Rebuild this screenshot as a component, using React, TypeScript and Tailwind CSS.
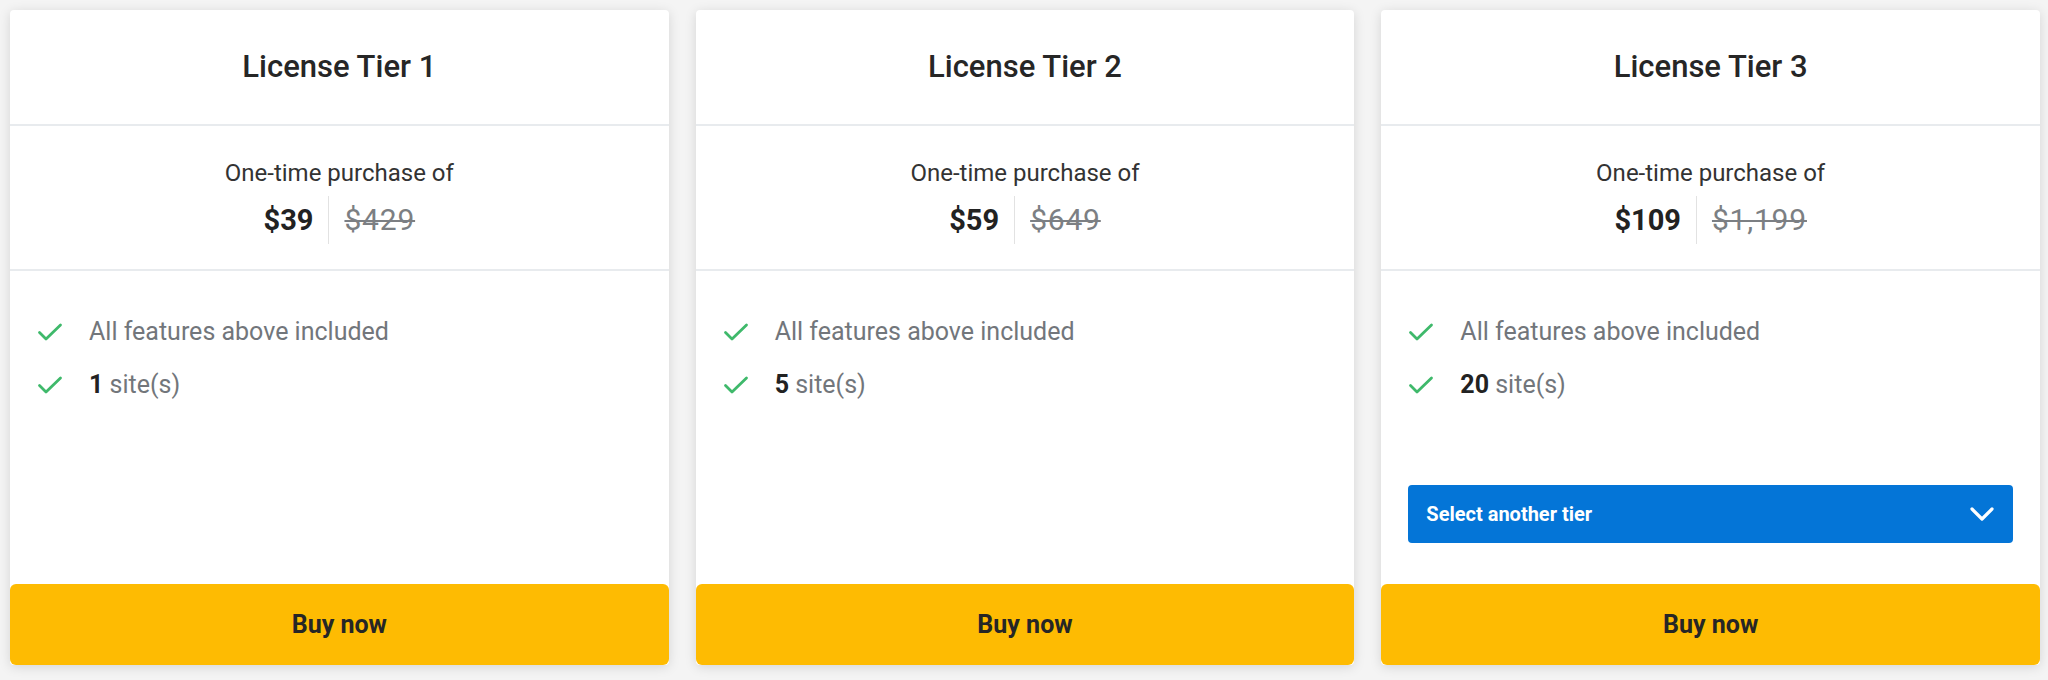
import React from 'react';

type Tier = {
  name: string;
  price: string;
  was: string;
  sites: number;
  picker?: boolean;
};

const tiers: Tier[] = [
  { name: 'License Tier 1', price: '$39', was: '$429', sites: 1 },
  { name: 'License Tier 2', price: '$59', was: '$649', sites: 5 },
  { name: 'License Tier 3', price: '$109', was: '$1,199', sites: 20, picker: true },
];

function Check() {
  return (
    <svg viewBox="0 0 26 24" className="h-[24px] w-[26px] shrink-0" fill="none" stroke="#3fb96b" strokeWidth={2.8} strokeLinecap="round" strokeLinejoin="round">
      <path d="M2.5 12.5l6.5 6.5L23.5 5" />
    </svg>
  );
}

function Chevron() {
  return (
    <svg viewBox="0 0 24 14" className="h-[14px] w-[24px]" fill="none" stroke="currentColor" strokeWidth={3.2} strokeLinecap="round" strokeLinejoin="round">
      <path d="M2 2l10 10L22 2" />
    </svg>
  );
}

function TierCard({ tier }: { tier: Tier }) {
  return (
    <div className="flex h-[655px] flex-col rounded-[4px] bg-white shadow-[0_2px_12px_rgba(0,0,0,0.13)]">
      {/* Title */}
      <div className="flex h-[116px] items-center justify-center border-b-2 border-[#e8ebee]">
        <h2 className="text-[31px] font-medium text-[#262626]">{tier.name}</h2>
      </div>

      {/* Price */}
      <div className="flex h-[145px] flex-col items-center justify-center border-b-2 border-[#e8ebee] pt-[6px]">
        <p className="text-[24px] leading-[32px] text-[#333]">One-time purchase of</p>
        <div className="mt-[7px] flex items-center">
          <span className="pr-[15px] text-[29px] font-bold leading-[40px] text-[#222]">{tier.price}</span>
          <span className="h-[48px] w-px bg-[#e2e2e2]" />
          <span className="pl-[15px] text-[30px] leading-[40px] tracking-[0.8px] text-[#7c7f83] line-through decoration-[2px]">{tier.was}</span>
        </div>
      </div>

      {/* Features */}
      <div className="flex flex-1 flex-col px-[27px] pt-[45px]">
        <ul className="flex flex-col gap-[21px]">
          <li className="flex items-center gap-[26px] text-[25px] leading-[32px] text-[#72767b]">
            <Check />
            All features above included
          </li>
          <li className="flex items-center gap-[26px] text-[25px] leading-[32px] text-[#72767b]">
            <Check />
            <span>
              <b className="font-bold text-[#222]">{tier.sites}</b> site(s)
            </span>
          </li>
        </ul>
        {tier.picker && (
          <button className="mt-auto mb-[41px] flex h-[58px] w-full items-center justify-between rounded-[4px] bg-[#0475d7] pl-[18px] pr-[19px] text-white">
            <span className="text-[20px] font-bold">Select another tier</span>
            <Chevron />
          </button>
        )}
      </div>

      <button className="flex h-[81px] w-full items-center justify-center rounded-[6px] bg-[#febb02] text-[25px] font-bold text-[#262626]">
        Buy now
      </button>
    </div>
  );
}

export default function App() {
  return (
    <div className="min-h-[680px] bg-[#f4f4f4] pl-[10px] pr-[8px] pt-[10px] font-['Roboto',sans-serif]">
      <div className="grid grid-cols-3 gap-[27px]">
        {tiers.map((t) => (
          <TierCard key={t.name} tier={t} />
        ))}
      </div>
    </div>
  );
}
